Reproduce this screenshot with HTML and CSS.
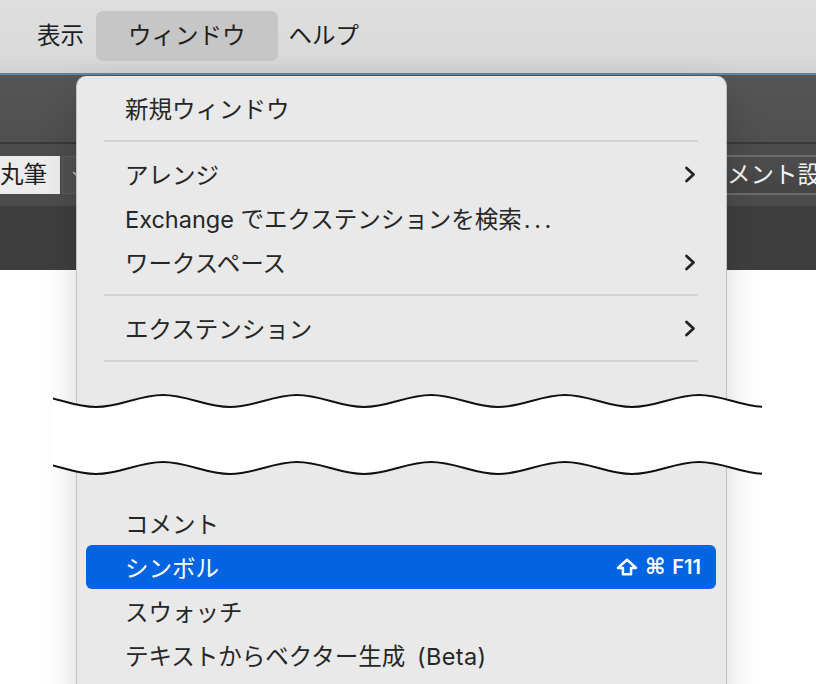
FILE: index.html
```html
<!DOCTYPE html>
<html lang="ja">
<head>
<meta charset="utf-8">
<link rel="stylesheet" href="styles.css">
</head>
<body>
<div class="page">
  <header class="menubar">
    <span class="mb-item">表示</span>
    <span class="mb-item mb-active">ウィンドウ</span>
    <span class="mb-item">ヘルプ</span>
  </header>
  <section class="app">
    <div class="app-top"></div>
    <div class="toolbar">
      <div class="brush-field">丸筆</div>
      <div class="brush-drop"><span class="drop-caret">⌄</span></div>
      <div class="tb-spacer"></div>
      <div class="comment-field">メント設</div>
    </div>
    <div class="app-bottom"></div>
  </section>
  <div class="canvas"></div>

  <nav class="menu">
    <div class="item"><span>新規ウィンドウ</span></div>
    <div class="sep"></div>
    <div class="item"><span>アレンジ</span><svg class="chev" viewBox="0 0 12 17" width="12" height="17"><polyline points="2.5,2 9.5,8.5 2.5,15"/></svg></div>
    <div class="item"><span>Exchange でエクステンションを検索<span class="dots">...</span></span></div>
    <div class="item"><span>ワークスペース</span><svg class="chev" viewBox="0 0 12 17" width="12" height="17"><polyline points="2.5,2 9.5,8.5 2.5,15"/></svg></div>
    <div class="sep"></div>
    <div class="item"><span>エクステンション</span><svg class="chev" viewBox="0 0 12 17" width="12" height="17"><polyline points="2.5,2 9.5,8.5 2.5,15"/></svg></div>
    <div class="sep"></div>
    <div class="gap"></div>
    <div class="item"><span>コメント</span></div>
    <div class="item selected"><span>シンボル</span>
      <span class="shortcut">
        <svg class="shift" viewBox="0 0 24 20" width="22" height="18"><path d="M12 2 L22 11 L16.5 11 L16.5 18 L7.5 18 L7.5 11 L2 11 Z"/></svg>
        <span class="cmd">⌘</span>
        <span class="fkey">F11</span>
      </span>
    </div>
    <div class="item"><span>スウォッチ</span></div>
    <div class="item"><span>テキストからベクター生成 <span class="beta">(Beta)</span></span></div>
  </nav>

  <svg class="tear" viewBox="53 385 709 100" width="709" height="100">
    <path class="tear-fill" d="M29,395 C53.4,395 71.6,407 96,407 C120.4,407 138.6,395 163,395 C187.4,395 205.6,407 230,407 C254.4,407 272.6,395 297,395 C321.4,395 339.6,407 364,407 C388.4,407 406.6,395 431,395 C455.4,395 473.6,407 498,407 C522.4,407 540.6,395 565,395 C589.4,395 607.6,407 632,407 C656.4,407 674.6,395 699,395 C723.4,395 741.6,407 766,407 L766,440 L29,440 Z"/>
    <path class="tear-fill" d="M29,462 C53.4,462 71.6,474 96,474 C120.4,474 138.6,462 163,462 C187.4,462 205.6,474 230,474 C254.4,474 272.6,462 297,462 C321.4,462 339.6,474 364,474 C388.4,474 406.6,462 431,462 C455.4,462 473.6,474 498,474 C522.4,474 540.6,462 565,462 C589.4,462 607.6,474 632,474 C656.4,474 674.6,462 699,462 C723.4,462 741.6,474 766,474 L766,430 L29,430 Z"/>
    <path class="tear-line" d="M29,395 C53.4,395 71.6,407 96,407 C120.4,407 138.6,395 163,395 C187.4,395 205.6,407 230,407 C254.4,407 272.6,395 297,395 C321.4,395 339.6,407 364,407 C388.4,407 406.6,395 431,395 C455.4,395 473.6,407 498,407 C522.4,407 540.6,395 565,395 C589.4,395 607.6,407 632,407 C656.4,407 674.6,395 699,395 C723.4,395 741.6,407 766,407"/>
    <path class="tear-line" d="M29,462 C53.4,462 71.6,474 96,474 C120.4,474 138.6,462 163,462 C187.4,462 205.6,474 230,474 C254.4,474 272.6,462 297,462 C321.4,462 339.6,474 364,474 C388.4,474 406.6,462 431,462 C455.4,462 473.6,474 498,474 C522.4,474 540.6,462 565,462 C589.4,462 607.6,474 632,474 C656.4,474 674.6,462 699,462 C723.4,462 741.6,474 766,474"/>
  </svg>
</div>
</body>
</html>
```

FILE: styles.css
```css
* { box-sizing: border-box; }
html, body { margin: 0; padding: 0; background: #ffffff; }
body {
  font-family: Inter, "Noto Sans CJK JP", sans-serif;
  color: #262626;
}
.page {
  position: relative;
  width: 816px;
  height: 684px;
  overflow: hidden;
  background: #ffffff;
}

/* menubar */
.menubar {
  height: 75px;
  display: flex;
  align-items: center;
  padding-left: 37px;
  padding-bottom: 2px;
  background: linear-gradient(#dedede, #dadada 75%, #d1d1d1);
  border-bottom: 2px solid #5b86ab;
  font-size: 23.5px;
  color: #1e1e1e;
}
.mb-item { line-height: 50px; }
.mb-item:first-child { margin-right: 12px; }
.mb-active {
  background: #c6c6c6;
  border-radius: 7px;
  padding: 0 32px;
  margin-right: 11px;
}

/* dark app area */
.app { display: flex; flex-direction: column; }
.app-top {
  height: 69px;
  background: linear-gradient(#565656, #4f4f4f);
  border-bottom: 2px solid #383838;
}
.toolbar {
  height: 62px;
  background: #4c4c4c;
  display: flex;
  align-items: center;
}
.brush-field {
  width: 60px;
  height: 38px;
  background: #ececec;
  color: #1c1c1c;
  font-size: 23.5px;
  line-height: 38px;
}
.brush-drop {
  width: 24px;
  height: 38px;
  margin-left: 2px;
  background: #505050;
  border: 1px solid #5e5e5e;
  color: #cfcfcf;
  font-size: 16px;
  line-height: 28px;
  padding-left: 8px;
}
.tb-spacer { flex: 1; }
.comment-field {
  width: 90px;
  height: 40px;
  white-space: nowrap;
  overflow: hidden;
  border-top: 2px solid #6c6c6c;
  border-bottom: 2px solid #6c6c6c;
  background: linear-gradient(#4d4d4d, #444444);
  color: #f2f2f2;
  font-size: 23.5px;
  line-height: 36px;
  padding-left: 1px;
}
.app-bottom {
  height: 64px;
  background: #3e3e3e;
}
.canvas { height: 420px; background: #ffffff; }

/* dropdown menu */
.menu {
  position: absolute;
  left: 76px;
  top: 76px;
  width: 651px;
  height: 640px;
  background: #e9e9e9;
  border: 1px solid #c2c2c2;
  border-top: none;
  border-radius: 10px 10px 0 0;
  box-shadow: 0 12px 34px rgba(0, 0, 0, 0.16);
  padding-top: 10px;
  display: flex;
  flex-direction: column;
  font-size: 23.5px;
}
.item {
  height: 44px;
  flex-shrink: 0;
  margin: 0 10px 0 9px;
  padding: 0 20px 0 39px;
  border-radius: 6px;
  display: flex;
  align-items: center;
  justify-content: space-between;
  white-space: nowrap;
  color: #262626;
}
.dots { letter-spacing: 3.5px; margin-left: 2px; }
.beta { margin-left: 5px; letter-spacing: 0.4px; }
.sep {
  height: 2px;
  flex-shrink: 0;
  margin: 10px 28px 10px 27px;
  background: #d2d2d2;
}
.gap { height: 129px; flex-shrink: 0; }
.chev { display: block; }
.chev polyline {
  fill: none;
  stroke: #242424;
  stroke-width: 2.8;
  stroke-linecap: round;
  stroke-linejoin: round;
}
.selected {
  background: #0264e1;
  color: #ffffff;
  padding-right: 15px;
}
.shortcut {
  display: flex;
  align-items: center;
  gap: 7px;
}
.shift path {
  fill: none;
  stroke: #ffffff;
  stroke-width: 2.8;
  stroke-linejoin: round;
}
.cmd {
  font-family: "DejaVu Sans", sans-serif;
  font-size: 22px;
  font-weight: bold;
  line-height: 20px;
}
.fkey {
  font-size: 20px;
  font-weight: 600;
  line-height: 20px;
}

/* torn break */
.tear {
  position: absolute;
  left: 53px;
  top: 385px;
}
.tear-fill { fill: #ffffff; stroke: none; }
.tear-line {
  fill: none;
  stroke: #111111;
  stroke-width: 2;
}
```
